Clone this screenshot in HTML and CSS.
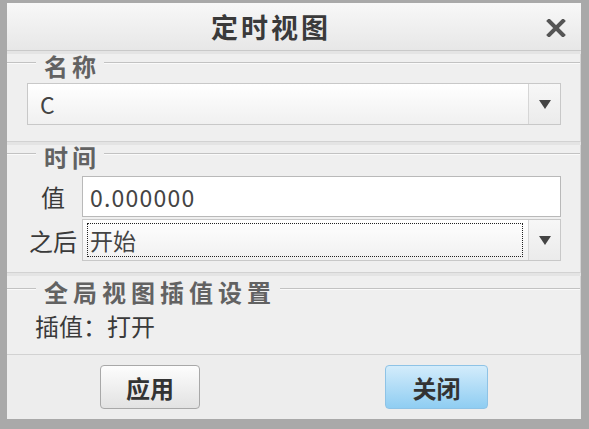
FILE: index.html
```html
<!DOCTYPE html>
<html lang="zh">
<head>
    <meta charset="UTF-8">
    <title>定时视图</title>
    <link rel="stylesheet" href="styles.css">
</head>
<body>
    <div class="window">
        <div class="titlebar">
            <div class="title">定时视图</div>
            <div class="close">
                <svg width="20" height="18" viewBox="0 0 20 18">
                    <path d="M3 2 L17 16 M17 2 L3 16" stroke="#555" stroke-width="4" stroke-linecap="square"/>
                </svg>
            </div>
        </div>

        <div class="section sec-name">
            <div class="legend">名称</div>
            <div class="combo">
                <div class="combo-text">C</div>
                <div class="combo-btn"><span class="arrow"></span></div>
            </div>
        </div>

        <div class="section sec-time">
            <div class="legend">时间</div>
            <div class="form-grid">
                <label>值</label>
                <div class="field">0.000000</div>
                <label>之后</label>
                <div class="combo combo-focus">
                    <div class="combo-text"><span class="focus-ring">开始</span></div>
                    <div class="combo-btn"><span class="arrow"></span></div>
                </div>
            </div>
        </div>

        <div class="section sec-global">
            <div class="legend">全局视图插值设置</div>
            <div class="info">插值：打开</div>
        </div>

        <div class="footer">
            <button class="btn">应用</button>
            <button class="btn btn-primary">关闭</button>
        </div>
    </div>
</body>
</html>
```

FILE: styles.css
```css
body {
    margin: 0;
    font-family: "Noto Sans CJK SC", "Liberation Sans", sans-serif;
    color: #333;
}
.window {
    box-sizing: border-box;
    width: 589px;
    height: 429px;
    border-style: solid;
    border-color: #a9a9a9;
    border-width: 3px 8px 10px 7px;
    background: #e4e4e4;
    display: flex;
    flex-direction: column;
}
.titlebar {
    height: 47px;
    display: flex;
    align-items: center;
    background: linear-gradient(#f8f8f8, #e7e7e7);
    border-bottom: 1px solid #c9c9c9;
}
.title {
    flex: 1;
    text-align: center;
    font-size: 27px;
    font-weight: bold;
    color: #3a3a3a;
    letter-spacing: 3px;
    padding-left: 4px;
}
.close {
    width: 50px;
    display: flex;
    justify-content: center;
    padding-top: 2px;
}
.section {
    background: #efefef;
    border-right: 1px solid #d4d4d4;
    border-bottom: 1px solid #d2d2d2;
    padding: 0 19px 0 19px;
}
.legend {
    display: flex;
    align-items: flex-start;
    font-size: 24px;
    font-weight: bold;
    color: #626262;
    line-height: 24px;
    height: 24px;
    margin: 0 -19px;
    letter-spacing: 4px;
}
.legend::before,
.legend::after {
    content: "";
    margin-top: 8px;
    border-top: 1px solid #c2c2c2;
    border-bottom: 1px solid #fafafa;
}
.legend::before {
    width: 29px;
    margin-right: 8px;
}
.legend::after {
    flex: 1;
    margin-left: 4px;
}
.sec-name {
    margin-top: 3px;
    padding-top: 0;
    padding-bottom: 16px;
}
.sec-name .legend {
    margin-bottom: 5px;
}
.sec-name .combo {
    margin-left: 1px;
}
.combo {
    display: flex;
    height: 40px;
    border: 1px solid #c8c8c8;
    background: linear-gradient(#ffffff, #f0f0f0);
}
.combo-text {
    flex: 1;
    display: flex;
    align-items: center;
    padding-left: 12px;
    font-size: 23px;
    color: #444;
}
.combo-btn {
    width: 31px;
    border-left: 1px solid #d6d6d6;
    background: linear-gradient(#f7f7f7, #ebebeb);
    display: flex;
    align-items: center;
    justify-content: center;
}
.arrow {
    width: 0;
    height: 0;
    border-left: 6px solid transparent;
    border-right: 6px solid transparent;
    border-top: 9px solid #444;
}
.sec-time {
    margin-top: 3px;
    padding-bottom: 11px;
}
.sec-time .legend {
    margin-top: 0;
    margin-bottom: 7px;
}
.form-grid {
    display: grid;
    grid-template-columns: 54px 1fr;
    column-gap: 2px;
    row-gap: 2px;
    align-items: center;
}
.form-grid label {
    font-size: 24px;
    text-align: center;
    color: #3a3a3a;
}
.field {
    height: 41px;
    box-sizing: border-box;
    border: 1px solid #b9b9b9;
    background: #fff;
    padding-left: 7px;
    display: flex;
    align-items: center;
    font-size: 23px;
    letter-spacing: 1.2px;
    color: #444;
}
.combo-focus .combo-text {
    padding: 3px 5px 3px 4px;
    align-items: stretch;
}
.focus-ring {
    flex: 1;
    border: 1px dotted #222;
    display: flex;
    align-items: center;
    padding-left: 2px;
    line-height: 1;
}
.sec-global {
    margin-top: 3px;
    padding-left: 28px;
    height: 79px;
    box-sizing: border-box;
}
.sec-global .legend {
    margin: 4px -19px 0 -28px;
    letter-spacing: 5px;
}
.info {
    margin-top: 9px;
    font-size: 24px;
    color: #3a3a3a;
    line-height: 26px;
}
.footer {
    flex: 1;
    display: flex;
    align-items: center;
    justify-content: space-between;
    padding: 0 93px;
    background: #ededed;
}
.btn {
    font-family: inherit;
    width: 100px;
    height: 44px;
    font-size: 24px;
    font-weight: bold;
    color: #333;
    border: 1px solid #a8a8a8;
    border-radius: 4px;
    background: linear-gradient(#fdfdfd, #e2e2e2);
    padding: 0;
}
.btn-primary {
    width: 103px;
    border-color: #8ec3e6;
    background: linear-gradient(#d3ecfb, #8fcdf2);
}
```
